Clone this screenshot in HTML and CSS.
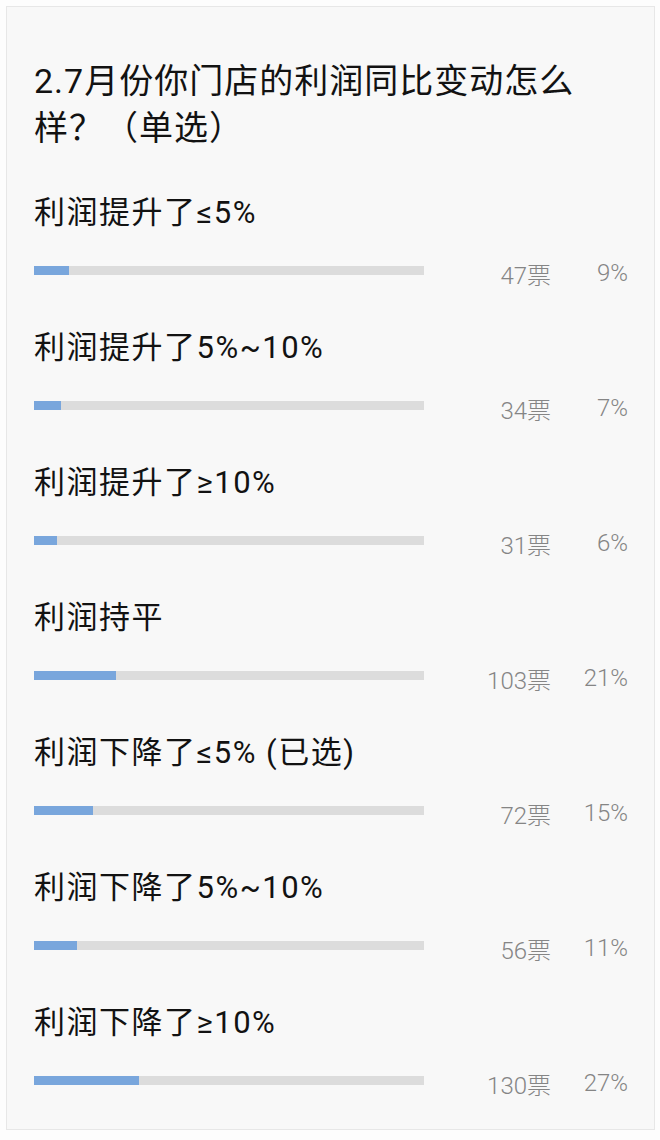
FILE: index.html
```html
<!DOCTYPE html>
<html lang="zh-CN">
<head>
<meta charset="utf-8">
<title>投票结果</title>
<link rel="stylesheet" href="styles.css">
</head>
<body>
<div class="card">
  <h1 class="title">2.7月份你门店的利润同比变动怎么样？（单选）</h1>
  <ul class="options">
    <li class="option">
      <div class="label">利润提升了≤5%</div>
      <div class="row"><div class="track"><div class="fill" style="width:9%"></div></div><span class="votes">47票</span><span class="pct">9%</span></div>
    </li>
    <li class="option">
      <div class="label">利润提升了5%~10%</div>
      <div class="row"><div class="track"><div class="fill" style="width:7%"></div></div><span class="votes">34票</span><span class="pct">7%</span></div>
    </li>
    <li class="option">
      <div class="label">利润提升了≥10%</div>
      <div class="row"><div class="track"><div class="fill" style="width:6%"></div></div><span class="votes">31票</span><span class="pct">6%</span></div>
    </li>
    <li class="option">
      <div class="label">利润持平</div>
      <div class="row"><div class="track"><div class="fill" style="width:21%"></div></div><span class="votes">103票</span><span class="pct">21%</span></div>
    </li>
    <li class="option">
      <div class="label">利润下降了≤5% (已选)</div>
      <div class="row"><div class="track"><div class="fill" style="width:15%"></div></div><span class="votes">72票</span><span class="pct">15%</span></div>
    </li>
    <li class="option">
      <div class="label">利润下降了5%~10%</div>
      <div class="row"><div class="track"><div class="fill" style="width:11%"></div></div><span class="votes">56票</span><span class="pct">11%</span></div>
    </li>
    <li class="option">
      <div class="label">利润下降了≥10%</div>
      <div class="row"><div class="track"><div class="fill" style="width:27%"></div></div><span class="votes">130票</span><span class="pct">27%</span></div>
    </li>
  </ul>
</div>
</body>
</html>
```
FILE: styles.css
```css
html, body {
  margin: 0;
  padding: 0;
}
body {
  background: #fdfdfd;
  padding: 6px 5px 0 6px;
  font-family: Roboto, "Noto Sans CJK SC", sans-serif;
  color: #121212;
}
.card {
  background: #f8f8f8;
  border: 1px solid #e7e7e7;
  padding: 51px 26px 32px 27px;
  height: 1124px;
  box-sizing: border-box;
}
.title {
  margin: 0 0 41px 0;
  font-size: 34px;
  font-weight: 400;
  line-height: 47px;
  letter-spacing: 1px;
}
.options {
  list-style: none;
  margin: 0;
  padding: 0;
}
.option {
  margin-bottom: 43px;
}
.option:last-child {
  margin-bottom: 0;
}
.label {
  font-size: 31px;
  line-height: 40px;
  letter-spacing: 1.5px;
  margin-bottom: 22px;
}
.row {
  display: flex;
  align-items: center;
  height: 30px;
}
.track {
  width: 390px;
  height: 9px;
  background: #dcdcdc;
  flex: none;
}
.fill {
  height: 100%;
  background: #79a6dc;
}
.votes, .pct {
  font-size: 24px;
  font-weight: 300;
  color: #858585;
  text-align: right;
  padding-top: 6px;
}
.votes {
  width: 127px;
}
.pct {
  width: 77px;
}
```
